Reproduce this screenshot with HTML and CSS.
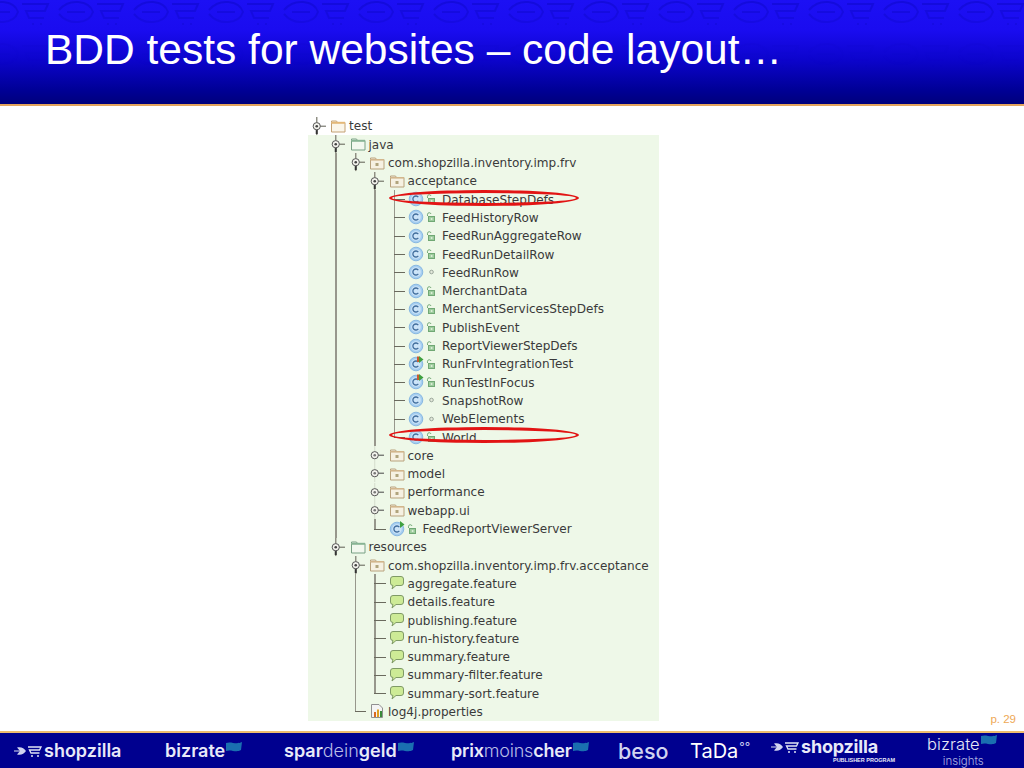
FILE: index.html
```html
<!DOCTYPE html>
<html lang="en">
<head>
<meta charset="utf-8">
<title>BDD tests for websites – code layout…</title>
<link rel="stylesheet" href="styles.css">
</head>
<body>
<svg class="defs" aria-hidden="true">
  <symbol id="open" viewBox="0 0 19.5 18.3">
    <path d="M9.75 0V18.3" stroke="#8a8a7e" stroke-width="1.400" fill="none"/>
    <path d="M9.75 12V17" stroke="#333" stroke-width="2" fill="none"/>
    <path d="M13 9.2H19" stroke="#5c5c50" fill="none"/>
    <circle cx="9.75" cy="9.2" r="3.6" fill="#f4f4ee" stroke="#555"/>
    <circle cx="9.75" cy="9.2" r="1.3" fill="#444"/>
  </symbol>
  <symbol id="closed" viewBox="0 0 19.5 18.3">
    <path d="M9.75 0V18.3" stroke="#d4dccc" fill="none"/>
    <path d="M13 9.2H19" stroke="#444" fill="none"/>
    <circle cx="9.75" cy="9.2" r="3.6" fill="#f4f4ee" stroke="#555"/>
    <circle cx="9.75" cy="9.2" r="1.3" fill="#777"/>
  </symbol>
  <symbol id="folder" viewBox="0 0 16 16">
    <path d="M1.500 4.500V3H6.500L7.500 4.500H15V14H1.500Z" fill="#fbf6ea" stroke="#c4a274"/>
    <path d="M1.500 4.800H15" stroke="#e4b878" stroke-width="2"/>
  </symbol>
  <symbol id="src" viewBox="0 0 16 16">
    <path d="M1.500 4.500V3H6.500L7.500 4.500H15V14H1.500Z" fill="#f2f8ee" stroke="#78a084"/>
    <path d="M1.500 4.800H15" stroke="#88b494" stroke-width="2"/>
  </symbol>
  <symbol id="pkg" viewBox="0 0 16 16">
    <path d="M1.500 4.500V3H6.500L7.500 4.500H15V14H1.500Z" fill="#f6f1e2" stroke="#b8a27c"/>
    <path d="M1.500 4.800H15" stroke="#d2b68c" stroke-width="1.600"/>
    <rect x="6.500" y="8" width="3" height="3" fill="#b0a47c"/>
  </symbol>
  <symbol id="cls" viewBox="0 0 16 16">
    <circle cx="8" cy="8" r="6.800" fill="#a6cef0" stroke="#88b8e2"/>
    <circle cx="8" cy="8" r="4.800" fill="#cce4f8"/>
    <path d="M10.300 6.200A3 3 0 1 0 10.300 9.800" fill="none" stroke="#3f6c9c" stroke-width="1.300"/>
  </symbol>
  <symbol id="run" viewBox="0 0 16 16">
    <circle cx="8" cy="8" r="6.800" fill="#a6cef0" stroke="#88b8e2"/>
    <circle cx="8" cy="8" r="4.800" fill="#cce4f8"/>
    <path d="M10.300 6.200A3 3 0 1 0 10.300 9.800" fill="none" stroke="#3f6c9c" stroke-width="1.300"/>
    <path d="M9 0.500H11V6H9Z" fill="#c85a30"/>
    <path d="M11 0L15.500 3.500L11 7Z" fill="#3fa03f"/>
  </symbol>
  <symbol id="runb" viewBox="0 0 16 16">
    <circle cx="8" cy="8" r="6.800" fill="#a6cef0" stroke="#88b8e2"/>
    <circle cx="8" cy="8" r="4.800" fill="#cce4f8"/>
    <path d="M10.300 6.200A3 3 0 1 0 10.300 9.800" fill="none" stroke="#3f6c9c" stroke-width="1.300"/>
    <path d="M11 0L15.500 3.500L11 7Z" fill="#3fa03f"/>
  </symbol>
  <symbol id="lock" viewBox="0 0 10 12">
    <path d="M1.500 5V3.200A1.800 1.800 0 0 1 5 3" fill="none" stroke="#78ac7c" stroke-width="1"/>
    <rect x="2.500" y="5.500" width="6" height="5" fill="#9ccb9c" stroke="#70a874"/>
    <rect x="4.800" y="7.200" width="1.600" height="1.600" fill="#eaf5e4"/>
  </symbol>
  <symbol id="dot" viewBox="0 0 10 12">
    <circle cx="5.500" cy="6" r="1.800" fill="#e4eadc" stroke="#9aa69a"/>
  </symbol>
  <symbol id="bub" viewBox="0 0 16 16">
    <path d="M4 1.500H12A2.500 2.500 0 0 1 14.500 4V8A2.500 2.500 0 0 1 12 10.500H7L3 14L4 10.500A2.500 2.500 0 0 1 1.500 8V4A2.500 2.500 0 0 1 4 1.500Z" fill="#cdeb96" stroke="#7f9a66"/>
  </symbol>
  <symbol id="props" viewBox="0 0 16 16">
    <path d="M2.500 1.500H10L13.500 5V14.500H2.500Z" fill="#f4f4f4" stroke="#909090"/>
    <rect x="5" y="9" width="2" height="5" fill="#d86a20"/>
    <rect x="8" y="6.500" width="2" height="7.500" fill="#e0a020"/>
    <rect x="11" y="8" width="2" height="6" fill="#3a8a3a"/>
  </symbol>
  <symbol id="cart" viewBox="0 0 30 12">
    <path d="M1 6H7" stroke="#b8bce0" stroke-width="1.200"/>
    <path d="M4 2.500C8 1.500 11 3 13 6C11 9 8 10.500 4 9.500L7 6Z" fill="#d0d4f0"/>
    <path d="M15 2H28L26.500 5H16.500L18 8H26.500M18 11H20M24 11H26" fill="none" stroke="#dfe3f5" stroke-width="1.300"/>
  </symbol>
  <symbol id="flag" viewBox="0 0 18 12">
    <path d="M1 2C6 0 11 4 17 1L16 9C11 12 6 8 1 10Z" fill="#1a6fb0"/>
  </symbol>
</svg>

<header class="head">
  <svg class="weave" aria-hidden="true">
    <defs>
      <pattern id="tile" width="75" height="42" patternUnits="userSpaceOnUse" x="-18" y="-2">
        <path d="M2 12C12 0 32 2 36 14C32 26 12 28 2 16" fill="none" stroke="#0e08c8" stroke-width="2"/>
        <path d="M10 14H28M40 6H66L63 13H44L47 20H62M50 26H52M58 26H60" fill="none" stroke="#0e08c8" stroke-width="2"/>
      </pattern>
      <linearGradient id="fade" x1="0" y1="0" x2="0" y2="1">
        <stop offset="0" stop-color="#fff" stop-opacity="0.550"/>
        <stop offset="0.600" stop-color="#fff" stop-opacity="0.150"/>
        <stop offset="1" stop-color="#fff" stop-opacity="0"/>
      </linearGradient>
      <mask id="fademask"><rect width="1024" height="70" fill="url(#fade)"/></mask>
    </defs>
    <rect width="1024" height="70" fill="url(#tile)" mask="url(#fademask)"/>
  </svg>
  <h1 class="title">BDD tests for websites – code layout…</h1>
</header>

<main class="slide">
  <div class="tree">
    <div class="row"><span class="c"><svg class="tog"><use href="#open"/></svg></span><svg class="ico"><use href="#folder"/></svg><span class="nm">test</span></div>
    <div class="panel">
      <div class="row"><span class="c"></span><span class="c"><svg class="tog"><use href="#open"/></svg></span><svg class="ico"><use href="#src"/></svg><span class="nm">java</span></div>
      <div class="row"><span class="c"></span><span class="c v"></span><span class="c"><svg class="tog"><use href="#open"/></svg></span><svg class="ico"><use href="#pkg"/></svg><span class="nm">com.shopzilla.inventory.imp.frv</span></div>
      <div class="row"><span class="c"></span><span class="c v"></span><span class="c"></span><span class="c"><svg class="tog"><use href="#open"/></svg></span><svg class="ico"><use href="#pkg"/></svg><span class="nm">acceptance</span></div>
      <div class="row ring"><span class="c"></span><span class="c v"></span><span class="c"></span><span class="c v"></span><span class="c t"></span><svg class="ico"><use href="#cls"/></svg><svg class="vis"><use href="#lock"/></svg><span class="nm">DatabaseStepDefs</span></div>
      <div class="row"><span class="c"></span><span class="c v"></span><span class="c"></span><span class="c v"></span><span class="c t"></span><svg class="ico"><use href="#cls"/></svg><svg class="vis"><use href="#lock"/></svg><span class="nm">FeedHistoryRow</span></div>
      <div class="row"><span class="c"></span><span class="c v"></span><span class="c"></span><span class="c v"></span><span class="c t"></span><svg class="ico"><use href="#cls"/></svg><svg class="vis"><use href="#lock"/></svg><span class="nm">FeedRunAggregateRow</span></div>
      <div class="row"><span class="c"></span><span class="c v"></span><span class="c"></span><span class="c v"></span><span class="c t"></span><svg class="ico"><use href="#cls"/></svg><svg class="vis"><use href="#lock"/></svg><span class="nm">FeedRunDetailRow</span></div>
      <div class="row"><span class="c"></span><span class="c v"></span><span class="c"></span><span class="c v"></span><span class="c t"></span><svg class="ico"><use href="#cls"/></svg><svg class="vis"><use href="#dot"/></svg><span class="nm">FeedRunRow</span></div>
      <div class="row"><span class="c"></span><span class="c v"></span><span class="c"></span><span class="c v"></span><span class="c t"></span><svg class="ico"><use href="#cls"/></svg><svg class="vis"><use href="#lock"/></svg><span class="nm">MerchantData</span></div>
      <div class="row"><span class="c"></span><span class="c v"></span><span class="c"></span><span class="c v"></span><span class="c t"></span><svg class="ico"><use href="#cls"/></svg><svg class="vis"><use href="#lock"/></svg><span class="nm">MerchantServicesStepDefs</span></div>
      <div class="row"><span class="c"></span><span class="c v"></span><span class="c"></span><span class="c v"></span><span class="c t"></span><svg class="ico"><use href="#cls"/></svg><svg class="vis"><use href="#lock"/></svg><span class="nm">PublishEvent</span></div>
      <div class="row"><span class="c"></span><span class="c v"></span><span class="c"></span><span class="c v"></span><span class="c t"></span><svg class="ico"><use href="#cls"/></svg><svg class="vis"><use href="#lock"/></svg><span class="nm">ReportViewerStepDefs</span></div>
      <div class="row"><span class="c"></span><span class="c v"></span><span class="c"></span><span class="c v"></span><span class="c t"></span><svg class="ico"><use href="#run"/></svg><svg class="vis"><use href="#lock"/></svg><span class="nm">RunFrvIntegrationTest</span></div>
      <div class="row"><span class="c"></span><span class="c v"></span><span class="c"></span><span class="c v"></span><span class="c t"></span><svg class="ico"><use href="#run"/></svg><svg class="vis"><use href="#lock"/></svg><span class="nm">RunTestInFocus</span></div>
      <div class="row"><span class="c"></span><span class="c v"></span><span class="c"></span><span class="c v"></span><span class="c t"></span><svg class="ico"><use href="#cls"/></svg><svg class="vis"><use href="#dot"/></svg><span class="nm">SnapshotRow</span></div>
      <div class="row"><span class="c"></span><span class="c v"></span><span class="c"></span><span class="c v"></span><span class="c t"></span><svg class="ico"><use href="#cls"/></svg><svg class="vis"><use href="#dot"/></svg><span class="nm">WebElements</span></div>
      <div class="row ring"><span class="c"></span><span class="c v"></span><span class="c"></span><span class="c v"></span><span class="c l"></span><svg class="ico"><use href="#cls"/></svg><svg class="vis"><use href="#lock"/></svg><span class="nm">World</span></div>
      <div class="row"><span class="c"></span><span class="c v"></span><span class="c"></span><span class="c"><svg class="tog"><use href="#closed"/></svg></span><svg class="ico"><use href="#pkg"/></svg><span class="nm">core</span></div>
      <div class="row"><span class="c"></span><span class="c v"></span><span class="c"></span><span class="c"><svg class="tog"><use href="#closed"/></svg></span><svg class="ico"><use href="#pkg"/></svg><span class="nm">model</span></div>
      <div class="row"><span class="c"></span><span class="c v"></span><span class="c"></span><span class="c"><svg class="tog"><use href="#closed"/></svg></span><svg class="ico"><use href="#pkg"/></svg><span class="nm">performance</span></div>
      <div class="row"><span class="c"></span><span class="c v"></span><span class="c"></span><span class="c"><svg class="tog"><use href="#closed"/></svg></span><svg class="ico"><use href="#pkg"/></svg><span class="nm">webapp.ui</span></div>
      <div class="row"><span class="c"></span><span class="c v"></span><span class="c"></span><span class="c l"></span><svg class="ico"><use href="#runb"/></svg><svg class="vis"><use href="#lock"/></svg><span class="nm">FeedReportViewerServer</span></div>
      <div class="row"><span class="c"></span><span class="c"><svg class="tog"><use href="#open"/></svg></span><svg class="ico"><use href="#src"/></svg><span class="nm">resources</span></div>
      <div class="row"><span class="c"></span><span class="c"></span><span class="c"><svg class="tog"><use href="#open"/></svg></span><svg class="ico"><use href="#pkg"/></svg><span class="nm">com.shopzilla.inventory.imp.frv.acceptance</span></div>
      <div class="row"><span class="c"></span><span class="c"></span><span class="c v"></span><span class="c t"></span><svg class="ico"><use href="#bub"/></svg><span class="nm">aggregate.feature</span></div>
      <div class="row"><span class="c"></span><span class="c"></span><span class="c v"></span><span class="c t"></span><svg class="ico"><use href="#bub"/></svg><span class="nm">details.feature</span></div>
      <div class="row"><span class="c"></span><span class="c"></span><span class="c v"></span><span class="c t"></span><svg class="ico"><use href="#bub"/></svg><span class="nm">publishing.feature</span></div>
      <div class="row"><span class="c"></span><span class="c"></span><span class="c v"></span><span class="c t"></span><svg class="ico"><use href="#bub"/></svg><span class="nm">run-history.feature</span></div>
      <div class="row"><span class="c"></span><span class="c"></span><span class="c v"></span><span class="c t"></span><svg class="ico"><use href="#bub"/></svg><span class="nm">summary.feature</span></div>
      <div class="row"><span class="c"></span><span class="c"></span><span class="c v"></span><span class="c t"></span><svg class="ico"><use href="#bub"/></svg><span class="nm">summary-filter.feature</span></div>
      <div class="row"><span class="c"></span><span class="c"></span><span class="c v"></span><span class="c l"></span><svg class="ico"><use href="#bub"/></svg><span class="nm">summary-sort.feature</span></div>
      <div class="row"><span class="c"></span><span class="c"></span><span class="c l"></span><svg class="ico"><use href="#props"/></svg><span class="nm">log4j.properties</span></div>
    </div>
  </div>
  <p class="page">p. 29</p>
</main>

<footer class="brands">
  <div class="lg"><svg class="mark"><use href="#cart"/></svg><span class="b">shopzilla</span></div>
  <div class="lg"><span class="b">bizrate</span><svg class="flag"><use href="#flag"/></svg></div>
  <div class="lg"><span class="b">spar</span><span class="th">dein</span><span class="b">geld</span><svg class="flag"><use href="#flag"/></svg></div>
  <div class="lg tight"><span class="b">prix</span><span class="th">moins</span><span class="b">cher</span><svg class="flag"><use href="#flag"/></svg></div>
  <div class="lg"><span class="beso">beso</span></div>
  <div class="lg"><span class="tada">TaDa</span><span class="sup">°°</span></div>
  <div class="stack pub"><div class="lg"><svg class="mark"><use href="#cart"/></svg><span class="b heavy">shopzilla</span></div><span class="sub">PUBLISHER PROGRAM</span></div>
  <div class="stack ins-wrap"><div class="lg"><span class="bz">bizrate</span><svg class="flag"><use href="#flag"/></svg></div><span class="ins">insights</span></div>
</footer>
</body>
</html>
```

FILE: styles.css
```css
* { box-sizing: border-box; }
html, body { margin: 0; padding: 0; }
body {
  width: 1024px;
  height: 768px;
  overflow: hidden;
  display: flex;
  flex-direction: column;
  background: #fff;
  font-family: "Liberation Sans", Arial, sans-serif;
}
.defs { display: none; }

.head {
  position: relative;
  height: 106px;
  flex: none;
  border-bottom: 2px solid #e3a45c;
  background: linear-gradient(#1c10f4 0, #1a0cf0 30px, #0c04cc 60px, #000096 90px, #00007c 104px);
  padding: 26px 0 0 45px;
}
.weave { position: absolute; left: 0; top: 0; width: 1024px; height: 70px; }
.title {
  position: relative;
  margin: 0;
  color: #fff;
  font-size: 42.500px;
  font-weight: 400;
  line-height: 48px;
  white-space: nowrap;
}

.slide {
  flex: 1;
  display: grid;
  grid-template-columns: 308px 351px 1fr;
  grid-template-rows: 1fr;
  padding-top: 10.850px;
  min-height: 0;
}
.tree { grid-column: 2; }
.panel { background: #eef8e8; }
.row {
  position: relative;
  display: flex;
  align-items: center;
  height: 18.310px;
  margin-left: -1.350px;
  font-family: "DejaVu Sans", sans-serif;
  font-size: 12.050px;
  color: #3a3a3a;
  white-space: nowrap;
}
.c { position: relative; flex: none; width: 19.500px; height: 100%; }
.v::before, .t::before, .l::before {
  content: "";
  position: absolute;
  left: 9px;
  top: 0;
  bottom: 0;
  width: 1.500px;
  background: #97978c;
}
.l::before { bottom: 50%; }
.t::after, .l::after {
  content: "";
  position: absolute;
  left: 9.250px;
  right: -1px;
  top: 50%;
  height: 1px;
  background: #6a6a5e;
}
.tog { display: block; width: 19.500px; height: 100%; overflow: visible; }
.ico { flex: none; width: 16px; height: 16px; margin-left: 3.850px; }
.vis { flex: none; width: 10px; height: 12px; margin-left: 2px; }
.nm { margin-left: 3px; padding-top: 1px; }
.vis + .nm { margin-left: 6px; }
.ring::after {
  content: "";
  position: absolute;
  left: 82.350px;
  top: -0.500px;
  box-sizing: border-box;
  width: 190px;
  height: 16px;
  border: 3.500px solid #e21414;
  border-radius: 50%;
}
.page {
  grid-column: 3;
  align-self: end;
  justify-self: end;
  margin: 0 8px 6px 0;
  color: #eea855;
  font-size: 11.500px;
}

.brands {
  flex: none;
  height: 37px;
  border-top: 2px solid #eebd6e;
  background: #00008f;
  display: grid;
  grid-template-columns: 152px 119px 167px 167px 72px 80px 157px 1fr;
  padding-left: 13px;
  align-items: center;
  color: #e8eaf8;
  font-family: Inter, sans-serif;
  font-size: 18px;
  line-height: 20px;
}
.lg { display: flex; align-items: center; }
.tight { letter-spacing: -0.200px; }
.b { font-weight: 600; }
.heavy { font-weight: 700; letter-spacing: -0.200px; }
.th { font-weight: 300; color: #b8bce6; }
.bz { font-size: 16.500px; font-weight: 300; letter-spacing: 0.100px; }
.beso { font-size: 21.500px; font-weight: 500; color: #d0d4f0; }
.mark { width: 30px; height: 12px; margin-right: 1px; flex: none; }
.flag { width: 18px; height: 12px; margin: -8px 0 0 0; flex: none; }
.tada { font-size: 20px; font-weight: 400; color: #fff; }
.sup { font-size: 12px; line-height: 12px; align-self: flex-start; color: #c8ccf0; margin-left: 1px; }
.stack { display: flex; flex-direction: column; }
.pub { width: 125px; }
.sub {
  align-self: flex-end;
  font-family: "Liberation Sans", sans-serif;
  font-size: 5.500px;
  line-height: 7px;
  font-weight: 700;
  white-space: nowrap;
}
.ins-wrap { justify-self: start; line-height: 20px; }
.ins {
  align-self: flex-end;
  padding-right: 14px;
  font-size: 11.500px;
  line-height: 14px;
  font-weight: 300;
  color: #aeb2e0;
}
```
